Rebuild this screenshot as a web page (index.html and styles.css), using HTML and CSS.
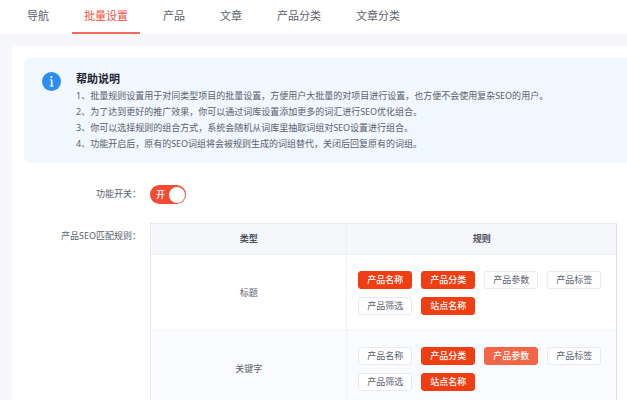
FILE: index.html
```
<!DOCTYPE html>
<html lang="zh-CN">
<head>
  <meta charset="UTF-8" />
  <title>批量设置</title>
  <link rel="stylesheet" href="styles.css">
</head>
<body>
<nav class="tabs">
  <a href="#">导航</a>
  <a href="#" class="active">批量设置</a>
  <a href="#">产品</a>
  <a href="#">文章</a>
  <a href="#">产品分类</a>
  <a href="#">文章分类</a>
</nav>

<main class="card">
  <section class="help">
    <svg class="help-icon" viewBox="0 0 19 19" aria-hidden="true">
      <circle cx="9.5" cy="9.5" r="9.5" fill="#2d8cf0" />
      <circle cx="9.4" cy="5" r="1.1" fill="#fff" />
      <path d="M7.8 7.9h1.9v6.2M7.6 14.1h4" fill="none" stroke="#fff" stroke-width="1" />
      <path d="M9.6 7.6v6.6" stroke="#fff" stroke-width="1.5" />
    </svg>
    <div class="help-text">
      <h1>帮助说明</h1>
      <p>1、批量规则设置用于对同类型项目的批量设置，方便用户大批量的对项目进行设置，也方便不会使用复杂SEO的用户。</p>
      <p>2、为了达到更好的推广效果，你可以通过词库设置添加更多的词汇进行SEO优化组合。</p>
      <p>3、你可以选择规则的组合方式，系统会随机从词库里抽取词组对SEO设置进行组合。</p>
      <p>4、功能开启后，原有的SEO词组将会被规则生成的词组替代，关闭后回复原有的词组。</p>
    </div>
  </section>

  <form class="settings">
    <div class="form-row">
      <label class="form-label" for="enable">功能开关：</label>
      <label class="switch">
        <input type="checkbox" id="enable" checked />
        <span class="switch-text">开</span>
        <span class="switch-knob"></span>
      </label>
    </div>

    <div class="form-row">
      <span class="form-label" id="ruleLabel">产品SEO匹配规则：</span>
      <table aria-labelledby="ruleLabel">
        <thead>
        <tr>
          <th class="col-type">类型</th>
          <th>规则</th>
        </tr>
        </thead>
        <tbody>
        <tr>
          <td>标题</td>
          <td>
            <div class="tags">
              <button type="button" class="tag on">产品名称</button>
              <button type="button" class="tag on">产品分类</button>
              <button type="button" class="tag">产品参数</button>
              <button type="button" class="tag">产品标签</button>
              <button type="button" class="tag">产品筛选</button>
              <button type="button" class="tag on">站点名称</button>
            </div>
          </td>
        </tr>
        <tr>
          <td>关键字</td>
          <td>
            <div class="tags">
              <button type="button" class="tag">产品名称</button>
              <button type="button" class="tag on">产品分类</button>
              <button type="button" class="tag on light">产品参数</button>
              <button type="button" class="tag">产品标签</button>
              <button type="button" class="tag">产品筛选</button>
              <button type="button" class="tag on">站点名称</button>
            </div>
          </td>
        </tr>
        </tbody>
      </table>
    </div>
  </form>
</main>
</body>
</html>
```
FILE: styles.css
```
* {
  box-sizing: border-box;
}
body {
  margin: 0;
  background: #f5f7fa;
  color: #5a606b;
  font-family: "Noto Sans", "Noto Sans CJK SC", sans-serif;
  font-size: 9px;
  line-height: 16px;
}

/* 顶部标签 */
.tabs {
  display: flex;
  gap: 11px;
  padding: 0 15px;
  background: #fff;
}
.tabs a {
  padding: 0 12px;
  border-bottom: 2px solid transparent;
  color: #5a606b;
  font-size: 11px;
  line-height: 32px;
  text-decoration: none;
}
.tabs a.active {
  border-color: #f5695c;
  color: #f5503c;
}

.card {
  margin: 12px 0 0 12px;
  padding: 12px 0 0 12px;
  border-radius: 4px 0 0 0;
  background: #fff;
}

/* 帮助说明 */
.help {
  display: flex;
  align-items: flex-start;
  gap: 15px;
  padding: 12px 18px 11px;
  border-radius: 6px 0 0 6px;
  background: #f0f7ff;
}
.help-icon {
  flex: none;
  width: 19px;
  height: 19px;
  margin-top: 2px;
}
.help h1 {
  margin: 0;
  color: #1f2633;
  font-size: 11px;
  line-height: 18px;
}
.help p {
  margin: 0;
}

/* 表单 */
.settings {
  display: flex;
  flex-direction: column;
  gap: 19px;
  padding: 22px 10px 0 0;
}
.form-row {
  display: flex;
  align-items: flex-start;
}
.form-label {
  flex: none;
  width: 126px;
  padding: 1px 9px 0 0;
  text-align: right;
}
.form-row > span.form-label {
  padding-top: 5px;
}

.switch {
  display: flex;
  align-items: center;
  justify-content: space-between;
  width: 36px;
  height: 19px;
  padding: 0 1px 0 6px;
  border-radius: 10px;
  background: #f24a33;
  color: #fff;
  font-weight: 500;
  cursor: pointer;
}
.switch input {
  position: absolute;
  margin: 0;
  opacity: 0;
}
.switch-knob {
  width: 16px;
  height: 16px;
  border-radius: 50%;
  background: #fff;
}

table {
  flex: 1;
  border: 1px solid #e8eaef;
  border-right: 1px solid #dcdee2;
  border-collapse: separate;
  border-spacing: 0;
  table-layout: fixed;
}
th, td {
  padding: 0;
  border-bottom: 1px solid #eff1f6;
  text-align: center;
}
th + th, td + td {
  border-left: 1px solid #eff1f6;
}
th {
  height: 31px;
  background: #f6f7fb;
  color: #4a505c;
}
.col-type {
  width: 42%;
}
td {
  height: 76px;
}
tbody tr:nth-child(even) {
  background: #fafbfe;
}

.tags {
  display: flex;
  flex-wrap: wrap;
  gap: 8px 9px;
  padding: 0 11px;
}
.tag {
  width: 54px;
  height: 18px;
  padding: 0;
  border: 1px solid #e8eaef;
  border-radius: 3px;
  background: #fff;
  color: #5a606b;
  font: inherit;
  line-height: 16px;
  cursor: pointer;
}
.tag.on {
  border-color: #f03e14;
  background: #f03e14;
  color: #fff;
  font-weight: 500;
}
.tag.light {
  border-color: #f26547;
  background: #f26547;
}
```
